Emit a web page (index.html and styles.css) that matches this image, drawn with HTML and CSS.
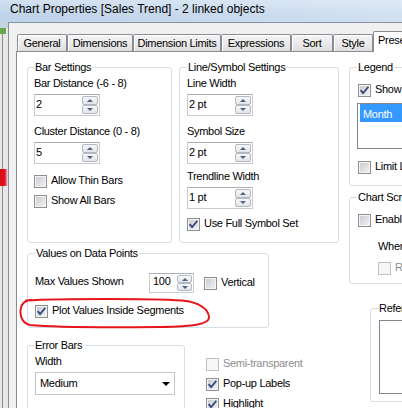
FILE: index.html
```html
<!DOCTYPE html>
<html>
<head>
<meta charset="utf-8">
<title>Chart Properties</title>
<link rel="stylesheet" href="styles.css">
</head>
<body>
<div class="screen">
  <div class="window">
    <div class="titlebar">Chart Properties [Sales Trend] - 2 linked objects</div>
    <div class="frame-row">
      <div class="glass"></div>
      <div class="client">
        <div class="tabs">
          <div class="tab t-general">General</div>
          <div class="tab t-dims">Dimensions</div>
          <div class="tab t-limits">Dimension Limits</div>
          <div class="tab t-expr">Expressions</div>
          <div class="tab t-sort">Sort</div>
          <div class="tab t-style">Style</div>
          <div class="tab sel">Presentation</div>
        </div>
        <div class="panel">
          <div class="left">
            <div class="row-top">
              <fieldset class="grp g-bar">
                <legend>Bar Settings</legend>
                <div class="lbl first">Bar Distance (-6 - 8)</div>
                <div class="spin"><span class="spin-val">2</span><span class="spin-btns"><span class="sb up"></span><span class="sb dn"></span></span></div>
                <div class="lbl next">Cluster Distance (0 - 8)</div>
                <div class="spin"><span class="spin-val">5</span><span class="spin-btns"><span class="sb up"></span><span class="sb dn"></span></span></div>
                <div class="chk thin"><span class="box"></span><span>Allow Thin Bars</span></div>
                <div class="chk allbars"><span class="box"></span><span>Show All Bars</span></div>
              </fieldset>
              <fieldset class="grp g-line">
                <legend>Line/Symbol Settings</legend>
                <div class="lbl first">Line Width</div>
                <div class="spin"><span class="spin-val">2 pt</span><span class="spin-btns"><span class="sb up"></span><span class="sb dn"></span></span></div>
                <div class="lbl next">Symbol Size</div>
                <div class="spin"><span class="spin-val">2 pt</span><span class="spin-btns"><span class="sb up"></span><span class="sb dn"></span></span></div>
                <div class="lbl trend">Trendline Width</div>
                <div class="spin"><span class="spin-val">1 pt</span><span class="spin-btns"><span class="sb up"></span><span class="sb dn"></span></span></div>
                <div class="chk fullset"><span class="box"><svg viewBox="1 1 11 11"><path d="M2.6 6.2 5.1 9.1 10.4 2.7"/></svg></span><span>Use Full Symbol Set</span></div>
              </fieldset>
            </div>
            <fieldset class="grp g-values">
              <legend>Values on Data Points</legend>
              <div class="vrow">
                <div class="mv-label">Max Values Shown</div>
                <div class="spin small"><span class="spin-val">100</span><span class="spin-btns"><span class="sb up"></span><span class="sb dn"></span></span></div>
                <div class="chk vert"><span class="box"></span><span>Vertical</span></div>
              </div>
              <div class="chk inside"><span class="box"><svg viewBox="1 1 11 11"><path d="M2.6 6.2 5.1 9.1 10.4 2.7"/></svg></span><span>Plot Values Inside Segments</span></div>
            </fieldset>
            <div class="row-bottom">
              <fieldset class="grp g-error">
                <legend>Error Bars</legend>
                <div class="lbl width-lbl">Width</div>
                <div class="dd"><span>Medium</span></div>
              </fieldset>
              <div class="misc">
                <div class="chk"><span class="box dis"></span><span class="dis-txt">Semi-transparent</span></div>
                <div class="chk"><span class="box"><svg viewBox="1 1 11 11"><path d="M2.6 6.2 5.1 9.1 10.4 2.7"/></svg></span><span>Pop-up Labels</span></div>
                <div class="chk"><span class="box"><svg viewBox="1 1 11 11"><path d="M2.6 6.2 5.1 9.1 10.4 2.7"/></svg></span><span>Highlight</span></div>
              </div>
            </div>
          </div>
          <div class="right">
            <fieldset class="grp g-legend">
              <legend>Legend</legend>
              <div class="chk show"><span class="box"><svg viewBox="1 1 11 11"><path d="M2.6 6.2 5.1 9.1 10.4 2.7"/></svg></span><span>Show Legend</span></div>
              <div class="list legend-list"><div class="item selected">Month</div></div>
              <div class="chk limit"><span class="box"></span><span>Limit Legend (Characters)</span></div>
            </fieldset>
            <fieldset class="grp g-scroll">
              <legend>Chart Scrolling</legend>
              <div class="chk enable"><span class="box"></span><span>Enable X-Axis Scrollbar</span></div>
              <div class="lbl when">When Number of Items Exceeds:</div>
              <div class="chk reversed"><span class="box dis"></span><span class="dis-txt">Reversed</span></div>
            </fieldset>
            <fieldset class="grp g-ref">
              <legend>Reference Lines</legend>
              <div class="list ref-list"></div>
            </fieldset>
          </div>
        </div>
      </div>
    </div>
  </div>
  <svg class="annot" width="402" height="408" viewBox="0 0 402 408">
    <path d="M26 300.5 C60 298.5 150 298.5 182 300.5 C200 302 209 310 209 317.5 C209 324 195 326.5 160 327 C110 327.5 50 327 30 325 C20 323 19 311 22 305 C23.5 302 26 300.5 31 300"/>
  </svg>
</div>
</body>
</html>
```
FILE: styles.css
```css
* { box-sizing: border-box; }
html, body { margin: 0; padding: 0; }
body {
  width: 402px; height: 408px; overflow: hidden;
  background: #f0f0f0;
  font-family: "Liberation Sans", Arial, sans-serif;
  font-size: 11px; letter-spacing: -0.3px; color: #000;
  white-space: nowrap;
}
.screen { position: relative; width: 402px; height: 408px; overflow: hidden; }
.window { width: 660px; height: 408px; display: flex; flex-direction: column; }

.titlebar {
  flex: none; height: 22px; padding-left: 10px;
  font-size: 12px; line-height: 19px; letter-spacing: 0;
  background:
    linear-gradient(180deg, rgba(255,255,255,.3), rgba(255,255,255,0) 70%),
    linear-gradient(90deg, #bfd3e9, #cbdcef 45%, #d8e6f4 75%, #e0ebf6);
}
.frame-row { flex: 1; display: flex; min-height: 0; }
.glass {
  flex: none; width: 8px;
  background:
    linear-gradient(90deg, #d90d17 0, #dc1420 5px, #f0a9bd 7px, rgba(240,200,215,0) 8px) 0 147px / 8px 17px no-repeat,
    linear-gradient(#68a74b, #68a74b) 0 6px / 6px 6px no-repeat,
    linear-gradient(#c4d2e0, #c4d2e0) 0 0 / 8px 6px no-repeat,
    linear-gradient(90deg, transparent 2px, #8d8d8d 2px, #8d8d8d 3px, transparent 3px) 0 12px / 8px 100% no-repeat,
    #e8e8e8;
}
.client {
  flex: 1; display: flex; flex-direction: column; min-width: 0;
  background: #f0f0f0;
  border-left: 1px solid #8592a0; border-top: 1px solid #8592a0;
  padding: 8px 0 0 7px;
}

/* tabs */
.tabs {
  flex: none; display: flex; align-items: flex-end; height: 20px;
  margin-left: 1px; position: relative; z-index: 1;
}
.tab {
  flex: none; height: 17px;
  border: 1px solid #898c95; border-bottom: 0; border-radius: 2px 2px 0 0;
  background: linear-gradient(#f4f4f4, #ebebeb 50%, #dedede);
  box-shadow: inset 1px 1px 0 #fff;
  line-height: 16px; text-align: center;
}
.t-general { width: 50px; }
.t-dims { width: 66px; }
.t-limits { width: 88px; }
.t-expr { width: 70px; }
.t-sort { width: 42px; }
.t-style { width: 40px; }
.tab.sel {
  width: 84px; height: 21px; margin-bottom: -1px;
  background: #fff; box-shadow: none;
  text-align: left; padding-left: 4px;
}

/* panel */
.panel {
  flex: 1; min-height: 0; display: flex; align-items: flex-start; gap: 10px;
  background: #fff;
  border-top: 1px solid #898c95; border-left: 1px solid #898c95;
  padding: 9px 0 0 10px;
}
.left { flex: none; width: 312px; display: flex; flex-direction: column; }
.row-top { display: flex; gap: 7px; }
.right { flex: none; width: 260px; display: flex; flex-direction: column; }

.grp {
  margin: 0; min-width: 0;
  border: 1px solid #d5dfe5; border-radius: 3px;
  padding: 0 6px;
}
.grp > legend { padding: 0 1px; line-height: 13px; }

.g-bar { width: 145px; height: 182px; }
.g-line { width: 160px; height: 182px; padding-left: 7px; }
.g-values { width: 242px; height: 81px; margin-top: 4px; padding-left: 7px; }
.row-bottom { display: flex; margin-top: 11px; }
.g-error { width: 158px; height: 100px; padding-left: 7px; }
.g-error > legend { margin-left: -1px; }
.misc { margin-left: 21px; padding-top: 19px; display: flex; flex-direction: column; gap: 7px; }

.g-legend { height: 125px; padding-left: 8px; }
.g-scroll { height: 93px; margin-top: 5px; padding-left: 8px; }
.g-legend > legend, .g-scroll > legend { margin-left: -1px; }
.g-ref { height: 100px; margin-top: 18px; margin-left: 21px; padding-left: 8px; }
.g-ref > legend { padding: 0; }

/* labels */
.lbl { line-height: 13px; }
.lbl.first { margin-top: 3px; }
.lbl.next { margin-top: 9px; }
.lbl.trend { margin-top: 6px; }
.lbl.width-lbl { margin-top: 3px; }
.lbl.when { margin-top: 13px; margin-left: 20px; }

/* spin boxes */
.spin {
  display: flex; width: 66px; height: 22px; margin-top: 4px;
  border: 1px solid #c8cbd1; border-top-color: #abadb3;
  background: #fff; padding: 1px;
}
.spin-val { flex: 1; padding: 2px 0 0 0; line-height: 13px; }
.spin-btns { flex: none; width: 16px; display: flex; flex-direction: column; }
.sb {
  flex: 1; display: flex; align-items: center; justify-content: center;
  border: 1px solid #b3b9c3; border-radius: 2px;
  background: linear-gradient(#f8f8f8, #e2e3e6);
}
.sb.up::after {
  content: ""; border: 3px solid transparent; border-top: 0;
  border-bottom: 3px solid #4e6287;
}
.sb.dn::after {
  content: ""; border: 3px solid transparent; border-bottom: 0;
  border-top: 3px solid #4e6287;
}
.spin.small { width: 45px; height: 20px; margin-top: 0; }
.spin.small .spin-val { padding: 0 0 0 2px; }
.spin.small .spin-btns { width: 15px; }

/* checkboxes */
.chk { display: flex; align-items: flex-start; gap: 4px; height: 13px; line-height: 11px; }
.box {
  flex: none; width: 13px; height: 13px; display: flex;
  border: 1px solid #8e8f8f;
  background: linear-gradient(135deg, #c6cacf, #f3f3f4);
  box-shadow: inset 0 0 0 1px #f4f4f4;
}
.box svg { width: 11px; height: 11px; }
.box path { fill: none; stroke: #34477d; stroke-width: 1.8; }
.box.dis { border-color: #c0c0c0; background: #f6f6f6; box-shadow: none; }
.dis-txt { color: #8d8d8d; }

.chk.thin { margin-top: 11px; }
.chk.allbars { margin-top: 7px; }
.chk.fullset { margin-top: 9px; }
.chk.inside { margin-top: 12px; }
.chk.show { margin-top: 10px; }
.chk.limit { margin-top: 12px; }
.chk.enable { margin-top: 10px; }
.chk.reversed { margin-top: 9px; margin-left: 20px; }

/* values row */
.vrow { display: flex; align-items: flex-start; margin-top: 13px; }
.mv-label { width: 114px; margin-top: 3px; line-height: 11px; }
.vrow .chk { margin-left: 10px; margin-top: 4px; }

/* dropdown */
.dd {
  width: 140px; height: 23px; margin-top: 4px;
  border: 1px solid #c3c6cc; background: #fff;
  display: flex; align-items: center; justify-content: space-between;
  padding: 0 4px; line-height: 13px;
}
.dd::after {
  content: ""; border: 4px solid transparent; border-bottom: 0;
  border-top: 4px solid #000;
}

/* list boxes */
.list { border: 1px solid #828790; background: #fff; }
.legend-list { margin-top: 6px; margin-left: -1px; height: 46px; padding: 0 0 0 2px; }
.item.selected {
  height: 18px; padding: 4px 0 0 3px; line-height: 13px;
  background: #3399ff; color: #fff;
}
.ref-list { margin-top: 5px; height: 74px; }

/* hand-drawn annotation */
.annot { position: absolute; left: 0; top: 0; pointer-events: none; }
.annot path { fill: none; stroke: #e8141c; stroke-width: 2; stroke-linecap: round; }
```
